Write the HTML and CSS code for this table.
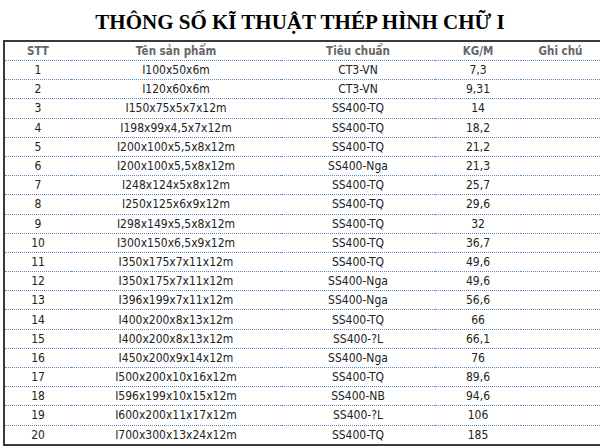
FILE: index.html
```html
<!DOCTYPE html>
<html lang="vi">
<head>
<meta charset="utf-8">
<link rel="stylesheet" href="styles.css">
</head>
<body>
<h1 class="title">THÔNG SỐ KĨ THUẬT THÉP HÌNH CHỮ I</h1>
<table class="spec">
<thead>
<tr><th class="c1">STT</th><th class="c2">Tên sản phẩm</th><th class="c3">Tiêu chuẩn</th><th class="c4">KG/M</th><th class="c5">Ghi chú</th></tr>
</thead>
<tbody>
<tr><td>1</td><td>I100x50x6m</td><td>CT3-VN</td><td>7,3</td><td></td></tr>
<tr><td>2</td><td>I120x60x6m</td><td>CT3-VN</td><td>9,31</td><td></td></tr>
<tr><td>3</td><td>I150x75x5x7x12m</td><td>SS400-TQ</td><td>14</td><td></td></tr>
<tr><td>4</td><td>I198x99x4,5x7x12m</td><td>SS400-TQ</td><td>18,2</td><td></td></tr>
<tr><td>5</td><td>I200x100x5,5x8x12m</td><td>SS400-TQ</td><td>21,2</td><td></td></tr>
<tr><td>6</td><td>I200x100x5,5x8x12m</td><td>SS400-Nga</td><td>21,3</td><td></td></tr>
<tr><td>7</td><td>I248x124x5x8x12m</td><td>SS400-TQ</td><td>25,7</td><td></td></tr>
<tr><td>8</td><td>I250x125x6x9x12m</td><td>SS400-TQ</td><td>29,6</td><td></td></tr>
<tr><td>9</td><td>I298x149x5,5x8x12m</td><td>SS400-TQ</td><td>32</td><td></td></tr>
<tr><td>10</td><td>I300x150x6,5x9x12m</td><td>SS400-TQ</td><td>36,7</td><td></td></tr>
<tr><td>11</td><td>I350x175x7x11x12m</td><td>SS400-TQ</td><td>49,6</td><td></td></tr>
<tr><td>12</td><td>I350x175x7x11x12m</td><td>SS400-Nga</td><td>49,6</td><td></td></tr>
<tr><td>13</td><td>I396x199x7x11x12m</td><td>SS400-Nga</td><td>56,6</td><td></td></tr>
<tr><td>14</td><td>I400x200x8x13x12m</td><td>SS400-TQ</td><td>66</td><td></td></tr>
<tr><td>15</td><td>I400x200x8x13x12m</td><td>SS400-?L</td><td>66,1</td><td></td></tr>
<tr><td>16</td><td>I450x200x9x14x12m</td><td>SS400-Nga</td><td>76</td><td></td></tr>
<tr><td>17</td><td>I500x200x10x16x12m</td><td>SS400-TQ</td><td>89,6</td><td></td></tr>
<tr><td>18</td><td>I596x199x10x15x12m</td><td>SS400-NB</td><td>94,6</td><td></td></tr>
<tr><td>19</td><td>I600x200x11x17x12m</td><td>SS400-?L</td><td>106</td><td></td></tr>
<tr><td>20</td><td>I700x300x13x24x12m</td><td>SS400-TQ</td><td>185</td><td></td></tr>
</tbody>
</table>
</body>
</html>
```
FILE: styles.css
```css
html, body {
  margin: 0;
  padding: 0;
  background: #fff;
}
.title {
  margin: 0;
  height: 40px;
  padding-top: 9px;
  box-sizing: border-box;
  text-align: center;
  font-family: "Liberation Serif", serif;
  font-weight: bold;
  font-size: 21px;
  line-height: 26px;
  color: #000;
}
.spec {
  margin-left: 3px;
  width: 595px;
  border: 2px solid #3a3a3a;
  border-spacing: 0;
  border-collapse: separate;
  table-layout: fixed;
  font-family: "DejaVu Sans Condensed", "DejaVu Sans", sans-serif;
  font-size: 12px;
  color: #222;
}
.spec th, .spec td {
  padding: 0;
  text-align: center;
  border-bottom: 1px dotted #5a8cc8;
  white-space: nowrap;
}
.spec th {
  height: 18px;
  font-size: 11.5px;
  font-weight: bold;
  color: #666;
}
.spec td {
  height: 18.2px;
}
.spec tbody tr:last-child td {
  border-bottom: none;
}
.c1 { width: 66px; }
.c2 { width: 210px; }
.c3 { width: 154px; }
.c4 { width: 86px; }
.c5 { width: 79px; }
```
